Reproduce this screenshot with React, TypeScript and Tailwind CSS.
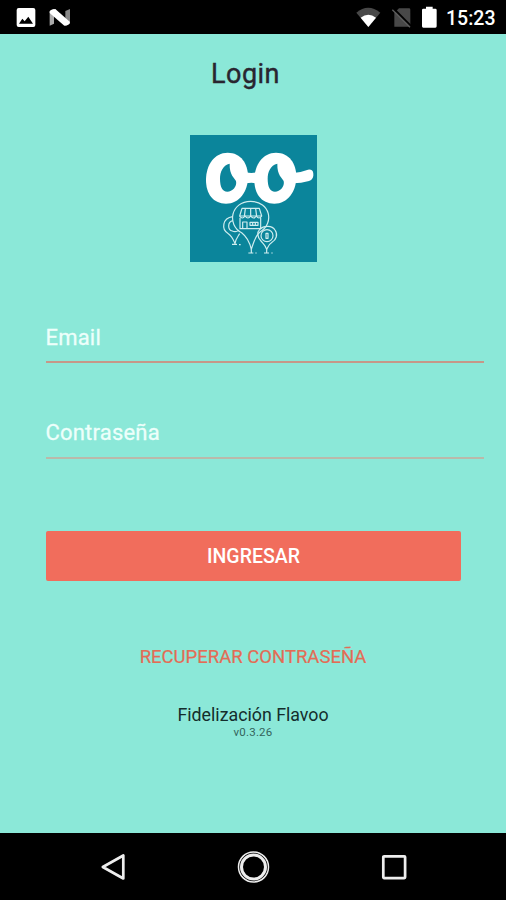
function StatusBar() {
  return (
    <header className="flex h-[34px] shrink-0 items-center bg-black">
      <svg className="h-[34px] w-[120px]" viewBox="0 0 360 102">
        <rect x="50" y="24" width="56" height="57" rx="6" fill="#fff" />
        <path d="M57 71 L67 56 L74 64 L85 50 L99 71 Z" fill="#000" />
        <path d="M149 33 L162 27 V71 L149 77 Z" fill="#aaa" />
        <path d="M196 33 L210 27 V71 L196 77 Z" fill="#888" />
        <path d="M149 35 Q152 27 166 27 L210 66 Q208 77 193 77 L149 39 Z" fill="#fff" />
      </svg>
      <svg className="ml-auto h-[34px] w-[100px]" viewBox="0 0 300 102">
        <path d="M49 38 Q84 8 121 38 L85 81 Z" fill="#484848" />
        <path d="M62 53 Q85 36 108 53 L85 81 Z" fill="#fff" />
        <path d="M177 25 H207 Q211 25 211 29 V80 H163 V39 Z" fill="#484848" />
        <path d="M162 27 L215 80" stroke="#000" strokeWidth="6" />
        <path d="M157 29 L210 82" stroke="#5c5c5c" strokeWidth="4" />
        <path d="M258 20 H278 V26 H286 Q290 26 290 30 V79 Q290 83 286 83 H250 Q246 83 246 79 V30 Q246 26 250 26 H258 Z" fill="#fff" />
      </svg>
      <span className="w-[66px] pl-[6px] pt-[3px] text-[19.5px] font-medium leading-[30px] text-white">15:23</span>
    </header>
  );
}

function Logo() {
  return (
    <svg className="mx-auto h-[127px] w-[127px]" viewBox="16 15 381 381">
      <rect x="16" y="15" width="381" height="381" fill="#0b859b" />
      <g fill="#fff">
        <path d="M129 68 C169 68 190 101 190 140 C190 184 164 221 124 221 C84 221 64 190 64 150 C64 105 89 68 129 68 Z" />
        <path d="M274 68 C314 68 335 101 335 140 C335 184 309 221 269 221 C229 221 209 190 209 150 C209 105 234 68 274 68 Z" />
        <path d="M184 127 Q200 131 217 127 V160 Q200 157 184 160 Z" />
        <path d="M326 129 Q349 127 370 119 Q385 117 386 131 Q388 148 373 153 Q349 160 326 160 Z" />
      </g>
      <g fill="#0b859b">
        <path d="M135 101 C114 106 106 126 106 146 C106 170 113 185 128 185 C143 185 158 170 154 153 C150 144 134 136 135 101 Z" />
        <path d="M278 101 C257 106 249 126 249 146 C249 170 256 185 271 185 C286 185 301 170 297 153 C293 144 277 136 278 101 Z" />
      </g>
      <g fill="none" stroke="#cfedef" strokeWidth="3.6" strokeLinejoin="round">
        <path d="M200 358 C194 331 185 319 171 308 C125 284 139 214 198 214 C257 214 270 280 226 306 C211 318 205 343 200 358 Z" />
        <path d="M144 260 C113 264 109 299 131 311 C143 319 146 329 151 341 C153 327 158 322 165 311" />
        <path d="M145 272 C127 276 129 300 143 303 C151 307 160 304 163 300" />
        <path d="M246 358 C242 345 236 341 229 333 C217 321 217 306 225 298 C238 285 263 286 271 300 C281 314 274 330 262 337 C252 343 250 349 246 358 Z" />
        <circle cx="247" cy="317" r="18" />
        <path d="M244 310 V325 H250 V310 Z" />
        <path d="M142 343 H157 M163 344 H168 M191 369 H206 M212 369 H216 M238 369 H253 M260 369 H264 M200 358 V368 M246 358 V368" />
        <path d="M172 235 H224 L231 258 H165 Z M166 263 V296 H228 V263 M182 236 L179 260 M198 236 V260 M213 236 L216 260" />
        <path d="M165 258 Q173 270 181 258 Q190 270 198 258 Q207 270 215 258 Q223 270 231 258" />
        <path d="M174 296 V276 H187 V296 M196 277 H220 V286 H196 Z M204 277 V286 M212 277 V286" />
      </g>
    </svg>
  );
}

function NavigationBar() {
  return (
    <nav className="flex h-[67px] shrink-0 items-center justify-between bg-black pl-[100px] pr-[98px]">
      <svg className="h-[28px] w-[28px]" viewBox="0 0 28 28" fill="none" stroke="#eee" strokeWidth="2.7" strokeLinejoin="round">
        <path d="M2.8 14 L23.3 2.5 V25.5 Z" />
      </svg>
      <svg className="h-[34px] w-[34px]" viewBox="0 0 34 34" fill="none" stroke="#eee">
        <circle cx="16.5" cy="17" r="15" strokeWidth="1.5" />
        <circle cx="16.5" cy="17" r="12" strokeWidth="3" />
      </svg>
      <svg className="h-[28px] w-[28px]" viewBox="0 0 28 28" fill="none" stroke="#eee" strokeWidth="2.7">
        <rect x="3.3" y="3.3" width="21.8" height="21.8" rx="0.8" />
      </svg>
    </nav>
  );
}

export default function App() {
  return (
    <div className="flex h-[900px] w-[506px] flex-col overflow-hidden bg-[#8be8d8] font-[Roboto,sans-serif]">
      <StatusBar />
      <main className="flex flex-1 flex-col">
        <h1 className="mt-[20px] h-10 pr-[15px] text-center text-[27px] font-normal leading-10 tracking-[0.5px] text-[#292530] [-webkit-text-stroke:0.4px_#292530]">Login</h1>
        <div className="mt-[41px] flex h-[127px]"><Logo /></div>
        <div className="ml-[45.5px] mr-[22px] mt-[58px] h-[43px] border-b-2 border-[#c69888] pt-[3px] text-[22px] leading-[30px] tracking-[0.2px] text-[#edfffb] [-webkit-text-stroke:0.3px_#edfffb]">Email</div>
        <div className="ml-[45.5px] mr-[22px] mt-[53px] h-[43px] border-b-2 border-[#bab9aa] pt-[2px] text-[22px] leading-[30px] tracking-[0.2px] text-[#edfffb] [-webkit-text-stroke:0.3px_#edfffb]">Contraseña</div>
        <button className="ml-[46px] mr-[45px] mt-[72px] h-[50px] rounded-[2px] bg-[#f16d5c] pt-[2px] text-[19.5px] font-medium text-white">INGRESAR</button>
        <button className="mt-[62px] h-[30px] text-[18.5px] text-[#e36c55] [-webkit-text-stroke:0.2px_#e36c55]">RECUPERAR CONTRASEÑA</button>
        <footer className="mt-[30px] text-center text-[#142d2c]">
          <p className="text-[17.8px] leading-[23px]">Fidelización Flavoo</p>
          <p className="text-[11.5px] leading-[12px] tracking-[0.2px] text-[#34645c]">v0.3.26</p>
        </footer>
      </main>
      <NavigationBar />
    </div>
  );
}
